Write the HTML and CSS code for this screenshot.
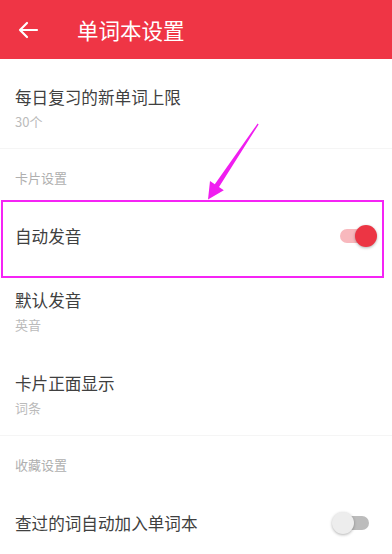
FILE: index.html
```html
<!DOCTYPE html>
<html lang="zh-CN">
<head>
<meta charset="utf-8">
<title>单词本设置</title>
<link rel="stylesheet" href="styles.css">
</head>
<body>
<div class="app">
  <header class="topbar">
    <svg class="back" width="22" height="18" viewBox="0 0 22 18" aria-hidden="true">
      <path d="M20 9H3M10 2L3 9l7 7" fill="none" stroke="#fff" stroke-width="2.2" stroke-linecap="round" stroke-linejoin="round"/>
    </svg>
    <h1 class="title">单词本设置</h1>
  </header>

  <div class="row two first">
    <div class="row-title">每日复习的新单词上限</div>
    <div class="row-sub">30个</div>
  </div>
  <div class="divider"></div>

  <div class="section">卡片设置</div>
  <div class="row single">
    <div class="row-title">自动发音</div>
    <div class="toggle on"><span class="track"></span><span class="thumb"></span></div>
  </div>
  <div class="row two">
    <div class="row-title">默认发音</div>
    <div class="row-sub">英音</div>
  </div>
  <div class="row two">
    <div class="row-title">卡片正面显示</div>
    <div class="row-sub">词条</div>
  </div>
  <div class="divider"></div>

  <div class="section">收藏设置</div>
  <div class="row single">
    <div class="row-title">查过的词自动加入单词本</div>
    <div class="toggle off"><span class="track"></span><span class="thumb"></span></div>
  </div>

  <div class="highlight-box"></div>
  <svg class="annot-arrow" width="392" height="554" viewBox="0 0 392 554" aria-hidden="true">
    <polygon points="258.6,124.4 219,187.1 223.8,190.3 208,199.5 210,181 214.8,184.3 257.6,123.6" fill="#f01ef0"/>
  </svg>
</div>
</body>
</html>
```

FILE: styles.css
```css
html, body {
  margin: 0;
  padding: 0;
  background: #ffffff;
}

body {
  font-family: "Noto Sans CJK SC", "Noto Sans", sans-serif;
  overflow: hidden;
}

.app {
  position: relative;
  width: 392px;
  height: 554px;
  overflow: hidden;
  background: #ffffff;
}

.topbar {
  height: 59px;
  background: #ef3545;
  display: flex;
  align-items: center;
  padding-left: 17px;
  box-sizing: border-box;
}

.back {
  display: block;
}

.title {
  margin: 0 0 0 38px;
  font-size: 21.5px;
  font-weight: 400;
  color: #ffffff;
  line-height: 28px;
}

.row {
  padding: 0 15px;
}

.row.two {
  padding-top: 19px;
  padding-bottom: 17px;
}

.row.two.first {
  padding-top: 26px;
  padding-bottom: 16px;
}

.row.single {
  height: 66px;
  display: flex;
  align-items: center;
  justify-content: space-between;
  padding-right: 15px;
}

.row-title {
  font-size: 16.6px;
  line-height: 24px;
  color: #404040;
}

.row-sub {
  margin-top: 3px;
  font-size: 13px;
  line-height: 20px;
  color: #bbbbbb;
}

.divider {
  height: 1px;
  background: #f5f5f5;
}

.section {
  padding: 20px 15px 16px;
  font-size: 13px;
  line-height: 18px;
  color: #afafaf;
}

.toggle {
  position: relative;
  width: 45px;
  height: 24px;
  flex: none;
}

.toggle .track {
  position: absolute;
  left: 8px;
  top: 5px;
  width: 29px;
  height: 14px;
  border-radius: 7px;
}

.toggle .thumb {
  position: absolute;
  top: 1px;
  width: 22px;
  height: 22px;
  border-radius: 50%;
  box-shadow: 0 1px 3px rgba(0, 0, 0, 0.3);
}

.toggle.on .track {
  background: #f8b8bd;
}

.toggle.on .thumb {
  right: 0;
  background: #ec3544;
}

.toggle.off .track {
  background: #bcbcbc;
}

.toggle.off .thumb {
  left: 0;
  background: #ededed;
}

.highlight-box {
  position: absolute;
  left: 1px;
  top: 200px;
  width: 383px;
  height: 78px;
  box-sizing: border-box;
  border: 2px solid #f524f5;
  pointer-events: none;
}

.annot-arrow {
  position: absolute;
  left: 0;
  top: 0;
  pointer-events: none;
}
```
